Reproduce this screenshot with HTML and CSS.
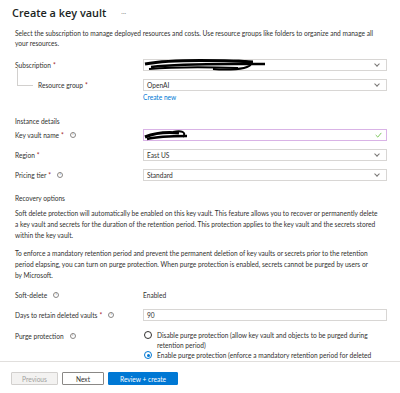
FILE: index.html
```html
<!DOCTYPE html>
<html>
<head>
    <link rel="stylesheet" href="styles.css">
</head>
<body>
    <div class="page">
        <header class="head">
            <h1>Create a key vault</h1>
            <span class="more">···</span>
        </header>

        <div class="content">
            <p class="intro">Select the subscription to manage deployed resources and costs. Use resource groups like folders to organize and manage all<br>your resources.</p>

            <div class="row">
                <div class="label">Subscription <span class="req">*</span></div>
                <div class="field">
                    <div class="select">
                        <svg class="scribble sub" viewBox="0 0 130 14" width="130" height="14">
                            <path d="M2 6 C30 1 70 2 110 4" stroke="#000" stroke-width="3" fill="none"/>
                            <path d="M8 9 C40 5 80 6 122 6" stroke="#000" stroke-width="2.5" fill="none"/>
                            <path d="M6 11 C30 9 60 9 95 10" stroke="#000" stroke-width="2" fill="none"/>
                            <path d="M90 3 C104 2 114 5 104 9 C96 12 80 12 70 11" stroke="#000" stroke-width="2" fill="none"/>
                        </svg>
                        <span class="chev"></span>
                    </div>
                </div>
            </div>

            <div class="row sub-row">
                <div class="label indent"><span class="tree"></span>Resource group <span class="req">*</span></div>
                <div class="field">
                    <div class="select">OpenAI<span class="chev"></span></div>
                    <a class="link">Create new</a>
                </div>
            </div>

            <div class="section first">Instance details</div>

            <div class="row">
                <div class="label">Key vault name <span class="req">*</span> <span class="info">i</span></div>
                <div class="field">
                    <div class="select valid">
                        <svg class="scribble name" viewBox="0 0 48 14" width="48" height="14">
                            <path d="M2 9 C14 4 26 4 36 5" stroke="#000" stroke-width="3" fill="none"/>
                            <path d="M4 11 C16 8 30 8 44 8" stroke="#000" stroke-width="2.5" fill="none"/>
                            <path d="M30 4 C38 2 44 4 40 9" stroke="#000" stroke-width="2" fill="none"/>
                        </svg>
                        <svg class="check" viewBox="0 0 10 8" width="7" height="6">
                            <path d="M1 4 L4 7 L9 1" stroke="#7bc75a" stroke-width="1.4" fill="none"/>
                        </svg>
                    </div>
                </div>
            </div>

            <div class="row">
                <div class="label">Region <span class="req">*</span></div>
                <div class="field"><div class="select">East US<span class="chev"></span></div></div>
            </div>

            <div class="row">
                <div class="label">Pricing tier <span class="req">*</span> <span class="info">i</span></div>
                <div class="field"><div class="select">Standard<span class="chev"></span></div></div>
            </div>

            <div class="section second">Recovery options</div>
            <p class="text">Soft delete protection will automatically be enabled on this key vault. This feature allows you to recover or permanently delete<br>a key vault and secrets for the duration of the retention period. This protection applies to the key vault and the secrets stored<br>within the key vault.</p>
            <p class="text">To enforce a mandatory retention period and prevent the permanent deletion of key vaults or secrets prior to the retention<br>period elapsing, you can turn on purge protection. When purge protection is enabled, secrets cannot be purged by users or<br>by Microsoft.</p>

            <div class="row plain">
                <div class="label">Soft-delete <span class="info">i</span></div>
                <div class="field value">Enabled</div>
            </div>

            <div class="row">
                <div class="label">Days to retain deleted vaults <span class="req">*</span> <span class="info">i</span></div>
                <div class="field"><div class="select">90</div></div>
            </div>

            <div class="row top">
                <div class="label purge">Purge protection <span class="info">i</span></div>
                <div class="field">
                    <div class="radio"><span class="dot"></span><span>Disable purge protection (allow key vault and objects to be purged during<br>retention period)</span></div>
                    <div class="radio on"><span class="dot"></span><span>Enable purge protection (enforce a mandatory retention period for deleted</span></div>
                </div>
            </div>
        </div>

        <footer class="foot">
            <button class="btn off">Previous</button>
            <button class="btn next">Next</button>
            <button class="btn primary">Review + create</button>
        </footer>
    </div>
</body>
</html>
```

FILE: styles.css
```css
body {
    margin: 0;
    background: #fff;
    color: #323130;
    font-family: Lato, 'Liberation Sans', sans-serif;
    font-size: 6.6px;
}
.page {
    width: 400px;
    height: 393px;
    overflow: hidden;
    display: flex;
    flex-direction: column;
}
.head {
    display: flex;
    align-items: center;
    padding-left: 12px;
    height: 24px;
    flex: none;
}
.head h1 {
    margin: 0;
    font-family: 'Open Sans', sans-serif;
    font-size: 10.9px;
    font-weight: 600;
    color: #201f1e;
}
.more {
    margin-left: 15px;
    color: #8a8886;
    font-size: 6px;
}
.content {
    padding: 0 13px 0 15px;
    flex: 1;
    overflow: hidden;
}
.intro {
    margin: 4px 0 11px;
    line-height: 10px;
    white-space: nowrap;
}
.row {
    display: grid;
    grid-template-columns: 128px 1fr;
    align-items: center;
    margin-bottom: 8px;
    line-height: 10px;
}
.row.top {
    align-items: start;
    margin-top: 9px;
    margin-bottom: 0;
}
.label {
    display: flex;
    align-items: center;
    gap: 2px;
}
.req {
    color: #a4262c;
}
.info {
    display: inline-flex;
    justify-content: center;
    align-items: center;
    box-sizing: border-box;
    width: 6px;
    height: 6px;
    border: 0.8px solid #8a8886;
    border-radius: 50%;
    font-size: 3.5px;
    line-height: 1;
    margin-left: 4px;
    color: #605e5c;
}
.indent {
    padding-left: 23px;
    position: relative;
}
.tree {
    position: absolute;
    left: 2px;
    top: -12px;
    width: 15px;
    height: 18px;
    border-left: 1px solid #d2d0ce;
    border-bottom: 1px solid #d2d0ce;
}
.select {
    position: relative;
    height: 10px;
    border: 1px solid #d8d6d4;
    padding: 0 3px;
    display: flex;
    align-items: center;
}
.select.valid {
    border-color: #d9b3e6;
}
.chev {
    position: absolute;
    right: 7px;
    top: 2px;
    width: 3px;
    height: 3px;
    border-right: 0.8px solid #797775;
    border-bottom: 0.8px solid #797775;
    transform: rotate(45deg);
}
.check {
    position: absolute;
    right: 4px;
    top: 2px;
}
.scribble {
    position: absolute;
    left: -1px;
    top: -2px;
}
.link {
    display: block;
    color: #0078d4;
    margin-top: 1px;
}
.sub-row {
    align-items: start;
    margin-bottom: 14px;
}
.sub-row .label {
    line-height: 12px;
}
.section {
    line-height: 10px;
}
.section.first {
    margin-bottom: 3px;
}
.section.second {
    margin-top: 12px;
    margin-bottom: 5px;
}
.text {
    margin: 0 0 7px;
    line-height: 11px;
    white-space: nowrap;
}
.plain {
    margin-top: 9px;
    margin-bottom: 9px;
}
.radio {
    display: flex;
    align-items: flex-start;
    gap: 5px;
    line-height: 10px;
    white-space: nowrap;
}
.purge {
    margin-top: 1px;
}
.dot {
    flex: none;
    box-sizing: border-box;
    width: 8px;
    height: 8px;
    border: 0.8px solid #323130;
    border-radius: 50%;
    margin-top: 1px;
    margin-left: 1px;
    position: relative;
}
.radio.on .dot {
    border-color: #0078d4;
}
.radio.on .dot::after {
    content: "";
    position: absolute;
    left: 1.6px;
    top: 1.6px;
    width: 3.2px;
    height: 3.2px;
    border-radius: 50%;
    background: #0078d4;
}
.foot {
    flex: none;
    height: 32px;
    box-sizing: border-box;
    border-top: 1px solid #e1dfdd;
    padding: 10px 11px 0;
    display: flex;
    align-items: flex-start;
    gap: 4px;
}
.btn {
    font-family: inherit;
    font-size: 6.6px;
    height: 13px;
    padding: 0;
    width: 47px;
    border: 1px solid #8a8886;
    background: #fff;
    color: #323130;
    border-radius: 1px;
}
.btn.next {
    width: 42px;
}
.btn.off {
    background: #f3f2f1;
    border-color: #d2d0ce;
    color: #a19f9d;
}
.btn.primary {
    width: 70px;
    background: #0078d4;
    border-color: #0078d4;
    color: #fff;
}
```
